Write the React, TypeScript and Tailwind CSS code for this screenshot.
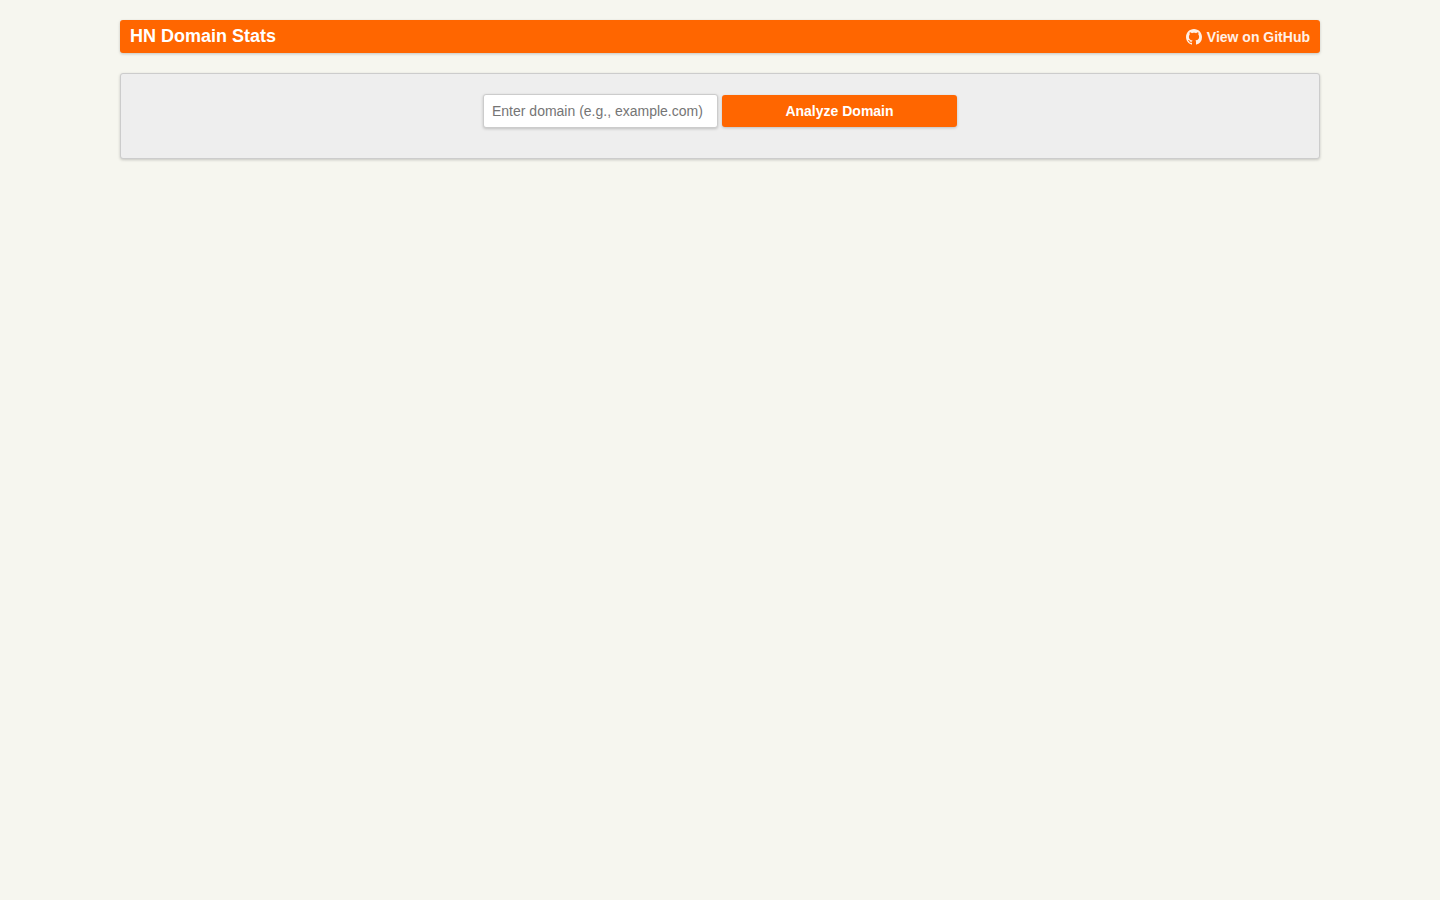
import React, { useState } from "react";

const GithubIcon = () => (
  <svg className="w-4 h-4" viewBox="0 0 16 16" fill="currentColor" aria-hidden="true">
    <path
      fillRule="evenodd"
      d="M8 0C3.58 0 0 3.58 0 8c0 3.54 2.29 6.53 5.47 7.59.4.07.55-.17.55-.38 0-.19-.01-.82-.01-1.49-2.01.37-2.53-.49-2.69-.94-.09-.23-.48-.94-.82-1.13-.28-.15-.68-.52-.01-.53.63-.01 1.08.58 1.23.82.72 1.21 1.87.87 2.33.66.07-.52.28-.87.51-1.07-1.78-.2-3.64-.89-3.64-3.95 0-.87.31-1.59.82-2.15-.08-.2-.36-1.02.08-2.12 0 0 .67-.21 2.2.82.64-.18 1.32-.27 2-.27.68 0 1.36.09 2 .27 1.53-1.04 2.2-.82 2.2-.82.44 1.1.16 1.92.08 2.12.51.56.82 1.27.82 2.15 0 3.07-1.87 3.75-3.65 3.95.29.25.54.73.54 1.48 0 1.07-.01 1.93-.01 2.2 0 .21.15.46.55.38A8.013 8.013 0 0016 8c0-4.42-3.58-8-8-8z"
    />
  </svg>
);

const Header = () => (
  <header className="flex items-center justify-between px-[10px] py-[5px] mb-5 rounded-[3px] bg-[#ff6600] text-white shadow-[0_1px_3px_rgba(0,0,0,0.2)]">
    <h1 className="text-lg leading-[23px] font-bold">HN Domain Stats</h1>
    <a
      href="https://github.com"
      className="flex items-center gap-[5px] text-sm font-bold opacity-90 hover:opacity-100"
    >
      <GithubIcon />
      View on GitHub
    </a>
  </header>
);

const App = () => {
  const [domain, setDomain] = useState("");
  return (
    <div className="min-h-screen p-5 bg-[#f6f6ef] font-['Liberation_Sans',Arial,sans-serif]">
      <div className="max-w-[1200px] mx-auto">
        <Header />
        <form
          className="flex flex-wrap items-center justify-center gap-1 px-5 pt-5 pb-[30px] border border-[#cccccc] rounded-[3px] bg-[#eeeeee] shadow-[0_1px_3px_rgba(0,0,0,0.2)]"
          onSubmit={(e) => e.preventDefault()}
        >
          <input
            type="text"
            aria-label="Domain"
            value={domain}
            onChange={(e) => setDomain(e.target.value)}
            placeholder="Enter domain (e.g., example.com)"
            className="w-[235px] p-2 text-sm leading-4 border border-[#cccccc] rounded-[3px] bg-white placeholder:text-[#757575] shadow-[0_1px_3px_rgba(0,0,0,0.2)]"
          />
          <button
            type="submit"
            className="w-[235px] p-2 text-sm leading-4 font-bold text-white rounded-[3px] bg-[#ff6600] cursor-pointer shadow-[0_1px_3px_rgba(0,0,0,0.2)]"
          >
            Analyze Domain
          </button>
        </form>
      </div>
    </div>
  );
};

export default App;
